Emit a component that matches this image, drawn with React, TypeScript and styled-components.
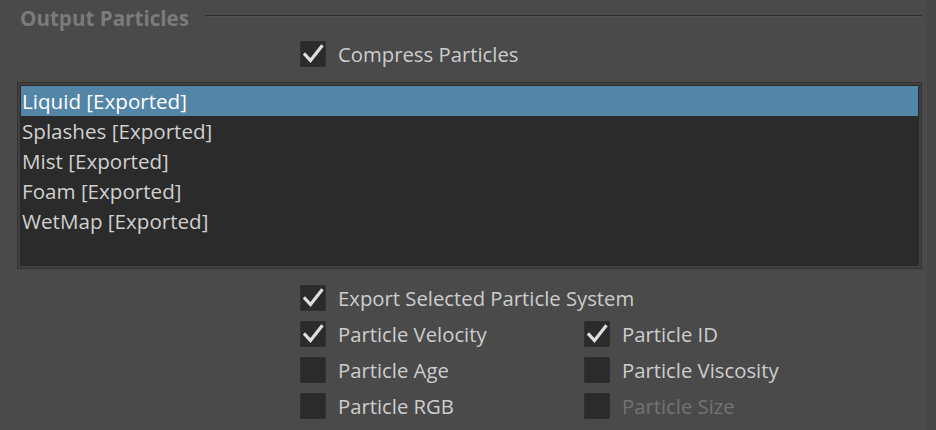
import React from "react";
import styled, { createGlobalStyle } from "styled-components";

const Global = createGlobalStyle`
  html, body { margin: 0; padding: 0; background: #4a4a4a; }
  body { font-family: "Open Sans", "Noto Sans", sans-serif; }
`;

const Page = styled.div`
  width: 936px;
  height: 430px;
  overflow: hidden;
  display: flex;
  background: #4a4a4a;
`;

const Main = styled.div`
  width: 927px;
  display: flex;
  flex-direction: column;
  padding-left: 17px;
  box-sizing: border-box;
`;

const SideStrip = styled.div`
  flex: 1;
  background: #464646;
`;

const Header = styled.div`
  height: 36px;
  display: flex;
  align-items: center;
  padding-left: 3px;
  padding-right: 5px;
`;

const Title = styled.div`
  font-size: 20.6px;
  font-weight: 700;
  color: #7b7b7b;
  line-height: 36px;
  margin-top: -1px;
`;

const Rule = styled.div`
  flex: 1;
  height: 1px;
  background: #2c2c2c;
  border-bottom: 1px solid #505050;
  margin-left: 16px;
  margin-top: -4px;
`;

const CheckRow = styled.label<{ $disabled?: boolean }>`
  display: flex;
  align-items: center;
  gap: 12px;
  height: 36px;
  font-size: 20.3px;
  color: ${(p) => (p.$disabled ? "#727272" : "#cdcdcd")};
  white-space: nowrap;
`;

const Box = styled.span`
  width: 26px;
  height: 26px;
  flex: none;
  background: #2b2b2b;
  border-radius: 2px;
  box-shadow: inset 0 0 0 1px #303030;
  display: flex;
  align-items: center;
  justify-content: center;
`;

const CompressWrap = styled.div`
  padding-left: 283px;
  height: 38px;
  display: flex;
  align-items: center;
  margin-top: -1px;
`;

const ListFrame = styled.div`
  margin-top: 9px;
  width: 905px;
  height: 187px;
  box-sizing: border-box;
  border: 1px solid #333333;
  background: #404040;
  padding: 2px;
`;

const ListInner = styled.div`
  height: 100%;
  box-sizing: border-box;
  background: #2b2b2b;
  padding: 1px 1px;
`;

const Item = styled.div<{ $selected?: boolean }>`
  height: 30px;
  line-height: 30px;
  font-size: 20.6px;
  padding-left: 1px;
  color: ${(p) => (p.$selected ? "#ffffff" : "#d0d0d0")};
  background: ${(p) => (p.$selected ? "#5385a7" : "transparent")};
  white-space: nowrap;
`;

const Options = styled.div`
  margin-top: 11px;
  padding-left: 283px;
  display: grid;
  grid-template-columns: 284px 1fr;
`;

const FullRow = styled.div`
  grid-column: 1 / -1;
`;

const Check = ({ on }: { on?: boolean }) => (
  <Box>
    {on && (
      <svg width="26" height="26" viewBox="0 0 26 26">
        <path
          d="M5 13.5 L10.5 19.5 L21.5 5.5"
          fill="none"
          stroke="#dedede"
          strokeWidth="3.2"
          strokeLinecap="square"
          strokeLinejoin="miter"
        />
      </svg>
    )}
  </Box>
);

const Option = ({
  label,
  on,
  disabled,
}: {
  label: string;
  on?: boolean;
  disabled?: boolean;
}) => (
  <CheckRow $disabled={disabled}>
    <Check on={on} />
    <span>{label}</span>
  </CheckRow>
);

const items = [
  "Liquid [Exported]",
  "Splashes [Exported]",
  "Mist [Exported]",
  "Foam [Exported]",
  "WetMap [Exported]",
];

export default function App() {
  return (
    <>
      <Global />
      <Page>
        <Main>
          <Header>
            <Title>Output Particles</Title>
            <Rule />
          </Header>
          <CompressWrap>
            <Option label="Compress Particles" on />
          </CompressWrap>
          <ListFrame>
            <ListInner>
              {items.map((it, i) => (
                <Item key={it} $selected={i === 0}>
                  {it}
                </Item>
              ))}
            </ListInner>
          </ListFrame>
          <Options>
            <FullRow>
              <Option label="Export Selected Particle System" on />
            </FullRow>
            <Option label="Particle Velocity" on />
            <Option label="Particle ID" on />
            <Option label="Particle Age" />
            <Option label="Particle Viscosity" />
            <Option label="Particle RGB" />
            <Option label="Particle Size" disabled />
          </Options>
        </Main>
        <SideStrip />
      </Page>
    </>
  );
}
